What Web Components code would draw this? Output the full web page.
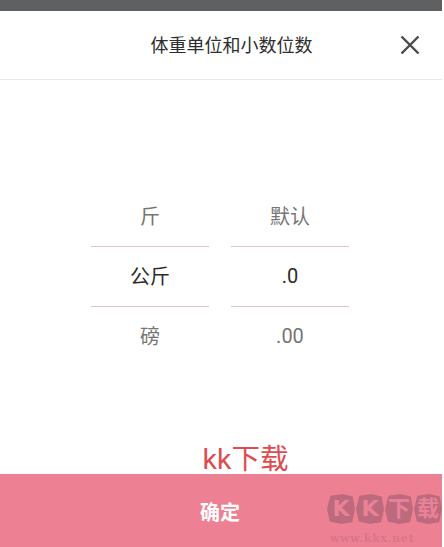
<!DOCTYPE html>
<html><head><meta charset="utf-8"><style>
html,body{margin:0;padding:0;background:#fff;height:100%;overflow:hidden}
body{font-family:"Noto Sans CJK SC","Roboto",sans-serif}
</style></head><body>
<weight-sheet></weight-sheet>
<script>
class SheetHeader extends HTMLElement{constructor(){super();this.attachShadow({mode:'open'}).innerHTML=`<style>
:host{display:flex;align-items:center;justify-content:center;height:68px;border-bottom:1px solid #e9e9e9;position:relative}
.t{font-size:18px;color:#2e2e2e;font-weight:400;padding:0 0 2px 21px}
svg{position:absolute;right:22px;top:24px;width:20px;height:20px}
</style><span class="t"><slot></slot></span><svg viewBox="0 0 20 20"><path d="M1.5 1.5L18.5 18.5M18.5 1.5L1.5 18.5" stroke="#4a4a4a" stroke-width="2.4" fill="none"/></svg>`}}
customElements.define('sheet-header',SheetHeader);
class PickerColumn extends HTMLElement{constructor(){super();this.attachShadow({mode:'open'}).innerHTML=`<style>
:host{display:block;width:118px;font-family:"Roboto","Noto Sans CJK SC",sans-serif}
div{height:59px;box-sizing:content-box;display:flex;align-items:center;justify-content:center;font-size:20px;color:#757575;font-weight:400;padding-bottom:0}
span{position:relative;top:-1px}
.m{border-top:1px solid #dfc8cd;border-bottom:1px solid #dfc8cd;color:#2b2b2b}
</style><div><span id="a"></span></div><div class="m"><span id="b"></span></div><div><span id="c"></span></div>`}
connectedCallback(){for(const k of ['a','b','c'])this.shadowRoot.getElementById(k).textContent=this.getAttribute(k)}}
customElements.define('picker-column',PickerColumn);
class MarkChip extends HTMLElement{constructor(){super();this.attachShadow({mode:'open'}).innerHTML=`<style>
:host{display:flex;align-items:center;justify-content:center;width:28px;height:30px;background:#bd6a7e;color:#e98297;font:700 22px/1 "DejaVu Sans","Noto Sans CJK SC",sans-serif;clip-path:polygon(12% 6%,55% 0,92% 8%,100% 50%,90% 94%,50% 100%,10% 92%,0 50%)}
</style><slot></slot>`}}
customElements.define('mark-chip',MarkChip);
class ConfirmBar extends HTMLElement{constructor(){super();this.attachShadow({mode:'open'}).innerHTML=`<style>
:host{display:flex;align-items:center;justify-content:center;height:73px;background:#ee8094;color:#fff;font-size:20px;font-weight:700;position:relative;overflow:visible}
.label{position:relative;top:1px;left:-1px}
.mark{position:absolute;left:327px;top:20px;width:117px;display:flex;flex-direction:column;align-items:flex-start;filter:blur(.5px)}
.chips{display:flex;gap:1px}
.small{font:700 11px/1 "DejaVu Serif",serif;letter-spacing:.7px;margin:9px 0 0 3px;color:#d8758a;white-space:nowrap}
</style><span class="label"><slot></slot></span><div class="mark"><div class="chips"><mark-chip>K</mark-chip><mark-chip>K</mark-chip><mark-chip>下</mark-chip><mark-chip>载</mark-chip></div><span class="small">www.kkx.net</span></div>`}}
customElements.define('confirm-bar',ConfirmBar);
class WeightSheet extends HTMLElement{constructor(){super();this.attachShadow({mode:'open'}).innerHTML=`<style>
:host{display:block;width:444px;height:547px;background:#fff}
.frame{display:flex;flex-direction:column;width:442px;height:547px}
.top{height:11px;background:#5f6062;flex:none}
.body{flex:1;display:flex;flex-direction:column;align-items:center}
.pick{display:flex;gap:22px;margin:107px 2px 0 0}
.kk{margin-top:auto;font-size:28.5px;color:#e04b4f;line-height:38px;height:38px;margin-bottom:-5px;padding-left:49px;font-family:"Roboto","Noto Sans CJK SC",sans-serif;font-weight:400}
confirm-bar{position:relative}
</style><div class="frame"><div class="top"></div><sheet-header>体重单位和小数位数</sheet-header>
<div class="body"><div class="pick"><picker-column a="斤" b="公斤" c="磅"></picker-column><picker-column a="默认" b=".0" c=".00"></picker-column></div><div class="kk">kk下载</div></div>
<confirm-bar>确定</confirm-bar></div>`}}
customElements.define('weight-sheet',WeightSheet);
</script></body></html>
